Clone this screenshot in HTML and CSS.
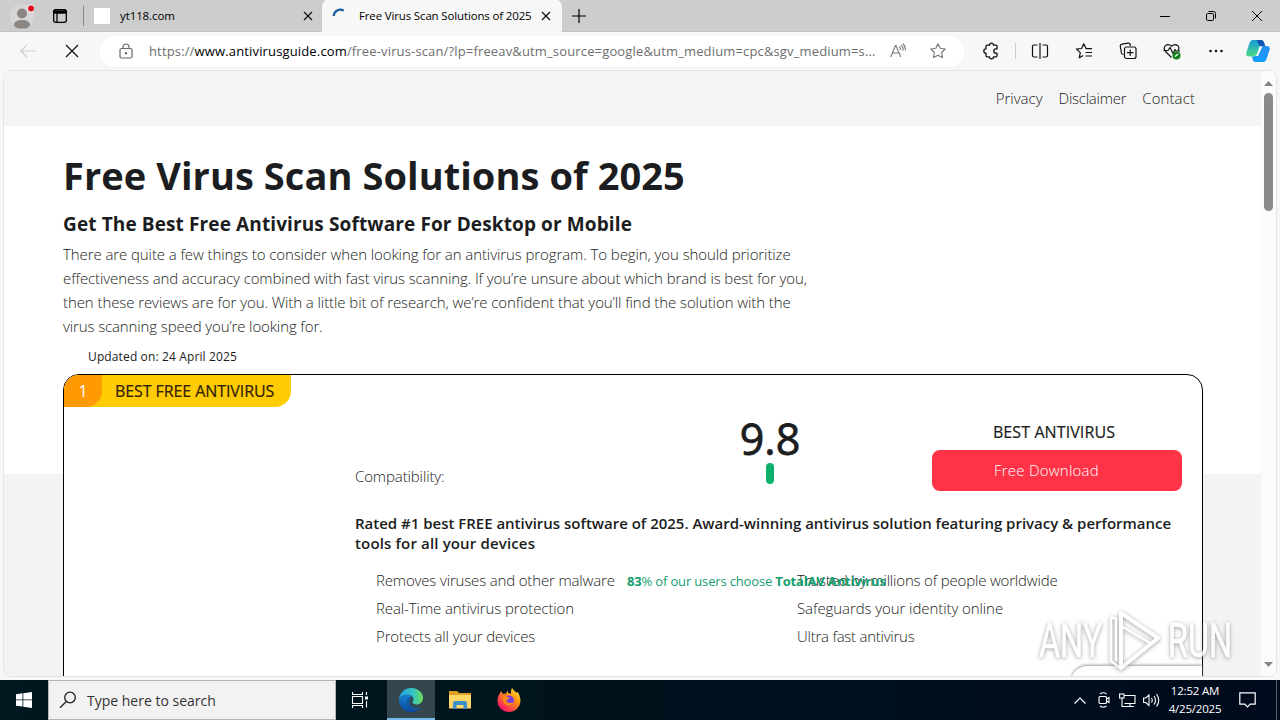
FILE: index.html
```html
<!DOCTYPE html>
<html lang="en">
	<head>
		<meta charset="UTF-8">
		<title>Free Virus Scan Solutions of 2025</title>
		<link rel="stylesheet" href="styles.css">
	</head>
	<body>
		<div class="tabs">
			<svg class="user" width="24" height="26" viewBox="0 0 24 26"><circle cx="12" cy="13" r="12" fill="#d6d6d6"/><circle cx="12" cy="10.500" r="5" fill="#8b8682"/><path d="M4 22c0-3 3-5 8-5s8 2 8 5c-1 3-4 3.500-8 3.500S5 25 4 22z" fill="#8b8682"/><circle cx="21" cy="5.500" r="4" fill="#eee"/><circle cx="21" cy="5.500" r="3" fill="#e00b1c"/></svg>
			<svg class="workspace" width="16" height="16" viewBox="0 0 16 16" fill="none" stroke="#000" stroke-width="1.300"><rect x="1.700" y="1.700" width="12.600" height="12.600" rx="2"/><path d="M2 3h12v2H2zM5 5v9" fill="#000"/></svg>
			<span class="line"></span>
			<div class="tab">
				<span class="blank"></span>
				<span class="name t1">yt118.com</span>
				<svg width="10" height="10" viewBox="0 0 10 10" stroke="#111" stroke-width="1.200"><path d="M1 1l8 8M9 1L1 9"/></svg>
			</div>
			<div class="tab active">
				<svg class="spin" width="16" height="16" viewBox="0 0 16 16" fill="none" stroke="#17619f" stroke-width="2.200"><path d="M1.700 8a6.500 6.500 0 0 1 10-5.300"/></svg>
				<span class="name t2">Free Virus Scan Solutions of 2025</span>
				<svg width="10" height="10" viewBox="0 0 10 10" stroke="#111" stroke-width="1.200"><path d="M1 1l8 8M9 1L1 9"/></svg>
			</div>
			<svg class="plus" width="14" height="14" viewBox="0 0 14 14" stroke="#000" stroke-width="1.200"><path d="M0 7h14M7 0v14"/></svg>
			<div class="wins">
				<svg width="12" height="12" viewBox="0 0 12 12" stroke="#000"><path d="M1 6.500h10"/></svg>
				<svg width="12" height="12" viewBox="0 0 12 12" fill="none" stroke="#000"><rect x="1.500" y="3.500" width="7" height="7" rx="1.200"/><path d="M3.500 1.500h5a2 2 0 0 1 2 2v5"/></svg>
				<svg width="12" height="12" viewBox="0 0 12 12" stroke="#000"><path d="M1 1l10 10M11 1L1 11"/></svg>
			</div>
		</div>
		<div class="bar">
			<svg class="back" width="16" height="14" viewBox="0 0 16 14" fill="none" stroke="#cdcdcd" stroke-width="1.200"><path d="M16 7H1M7 .8L.8 7 7 13.200"/></svg>
			<svg class="stop" width="14" height="14" viewBox="0 0 14 14" stroke="#111" stroke-width="1.200"><path d="M1 1l12 12M13 1L1 13"/></svg>
			<div class="address">
				<svg class="lock" width="14" height="16" viewBox="0 0 14 16" fill="none" stroke="#666" stroke-width="1.200"><rect x="1" y="5.500" width="12" height="9.500" rx="1.500"/><path d="M4 5.500V4a3 3 0 0 1 6 0v1.500"/><circle cx="7" cy="10.300" r=".6" fill="#666"/></svg>
				<p class="url">https://<b>www.antivirusguide.com</b>/free-virus-scan/?lp=freeav&amp;utm_source=google&amp;utm_medium=cpc&amp;sgv_medium=s...</p>
				<svg class="read" width="16" height="16" viewBox="0 0 16 16" fill="none" stroke="#777" stroke-width="1.100"><path d="M.7 14L5.500 2.500h.4L10.700 14M2.400 10h6.600M9.200 3.500q1.500 1.500 1.200 3.500M11 1.800q2.600 2.300 2 5.800M12.800.5q3 3 2.400 6.800"/></svg>
				<svg class="star" width="16" height="16" viewBox="0 0 16 16" fill="none" stroke="#777" stroke-width="1.100" stroke-linejoin="round"><path d="M8 .8l2.200 4.500 5 .7-3.600 3.500.9 5L8 12.200l-4.500 2.300.9-5L.8 6l5-.7z"/></svg>
			</div>
			<div class="tools">
				<svg width="18" height="18" viewBox="0 0 18 18" fill="none" stroke="#111" stroke-width="1.300" stroke-linejoin="round"><path d="M5 3.200h2.500a2 2 0 0 1 4 0H14q1 0 1 1v2.600h-1a2.200 2.200 0 0 0 0 4.400h1v2.600q0 1-1 1h-2.500a2 2 0 0 1-4 0H5q-1 0-1-1v-2.600a2.200 2.200 0 0 1 0-4.400V4.200q0-1 1-1z"/></svg>
				<i></i>
				<svg width="18" height="18" viewBox="0 0 18 18" fill="none" stroke="#111" stroke-width="1.200"><path d="M6.500 3H3a1.500 1.500 0 0 0-1.500 1.500v9A1.500 1.500 0 0 0 3 15h3.500M11.500 3H15a1.500 1.500 0 0 1 1.500 1.500v9A1.500 1.500 0 0 1 15 15h-3.500M9 1v16"/></svg>
				<svg width="18" height="18" viewBox="0 0 18 18" fill="none" stroke="#111" stroke-width="1.200" stroke-linejoin="round"><path d="M17 6.700h-5.800L8.700 1.800 6.600 6.500l-5.200.6 3.900 3.500-1 5.200 3.900-2.200M10.500 10.500H17M10.500 14H17"/></svg>
				<svg width="18" height="18" viewBox="0 0 18 18" fill="none" stroke="#111" stroke-width="1.200"><path d="M4.500 12.500l-1-.3a2 2 0 0 1-1.200-2.300l-1-5.500a2 2 0 0 1 1.700-2.300l6-1A2 2 0 0 1 11.300 3v1"/><rect x="5.500" y="5" width="11.500" height="11.500" rx="2"/><path d="M11.200 7.500v6.500M8 10.700h6.500"/></svg>
				<svg width="18" height="18" viewBox="0 0 18 18" fill="none" stroke="#111" stroke-width="1.200" stroke-linejoin="round"><path d="M8.500 15.500L2.500 9.500C-1 5 4 .2 8.500 4.200 13 .2 18 5 15 8.500M.5 8.500H5l2-3 3 6 2-4 1 1.500h4"/><circle cx="13.500" cy="13.500" r="4" fill="#15801b" stroke="none"/><path d="M12 14.500l3-2.500" stroke="#fff"/></svg>
				<svg width="18" height="18" viewBox="0 0 18 18" fill="#111"><circle cx="3.500" cy="9" r="1.300"/><circle cx="9" cy="9" r="1.300"/><circle cx="14.500" cy="9" r="1.300"/></svg>
			</div>
			<svg class="copilot" width="24" height="24" viewBox="0 0 24 24">
				<defs>
					<linearGradient id="ca" x2="0" y2="1"><stop offset="0" stop-color="#159bd7"/><stop offset="1" stop-color="#4edc87"/></linearGradient>
					<linearGradient id="cb" x2="0" y2="1"><stop offset="0" stop-color="#2b8dec"/><stop offset="1" stop-color="#109eff"/></linearGradient>
				</defs>
				<path d="M7 1h8q2.500 0 3.500 4l.6 2h-3q-2.300 0-3 2l-2 6q-.9 2.500-3 2.500H3q-3.500 0-2.600-4L3.500 4Q4.500 1 7 1z" fill="url(#ca)"/>
				<path d="M11 1h4q2.500 0 3.500 4l.6 2h-4.600Q12.500 7 11 1z" fill="#1556b0"/>
				<path d="M17 7h4q3.500 0 2.600 4L20.500 20q-1 3-3.500 3H9.500Q7 23 6.500 20L6 17.500h2q2.100 0 3-2.500l2-6q.7-2 4-2z" fill="url(#cb)"/>
				<path d="M13.500 7.500h3L12 17H8.700q1.800-.4 2.300-2z" fill="#f5fbff"/>
			</svg>
		</div>
		<div class="view">
			<div class="page">
				<div class="nav"><a class="n1">Privacy</a><a class="n2">Disclaimer</a><a class="n3">Contact</a></div>
				<div class="main">
					<h1>Free Virus Scan Solutions of 2025</h1>
					<h2>Get The Best Free Antivirus Software For Desktop or Mobile</h2>
					<p class="intro">
						<span class="l1">There are quite a few things to consider when looking for an antivirus program. To begin, you should prioritize</span>
						<span class="l2">effectiveness and accuracy combined with fast virus scanning. If you’re unsure about which brand is best for you,</span>
						<span class="l3">then these reviews are for you. With a little bit of research, we’re confident that you’ll find the solution with the</span>
						<span class="l4">virus scanning speed you’re looking for.</span>
					</p>
					<p class="date">Updated on: 24 April 2025</p>
					<div class="card">
						<div class="label"><span class="num">1</span><span class="best">BEST FREE ANTIVIRUS</span></div>
						<div class="info">
							<div class="top">
								<p class="comp">Compatibility:</p>
								<div class="score"><span>9.8</span><i></i></div>
								<div class="get"><p>BEST ANTIVIRUS</p><a><span>Free Download</span></a></div>
							</div>
							<h3><span class="r1">Rated #1 best FREE antivirus software of 2025. Award-winning antivirus solution featuring privacy &amp; performance</span><span class="r2">tools for all your devices</span></h3>
							<div class="lists">
								<ul><li class="a1">Removes viruses and other malware</li><li class="a2">Real-Time antivirus protection</li><li class="a3">Protects all your devices</li></ul>
								<ul><li class="b1">Trusted by millions of people worldwide</li><li class="b2">Safeguards your identity online</li><li class="b3">Ultra fast antivirus</li></ul>
								<p class="users"><b>83</b>% of our users choose <b>TotalAV Antivirus</b></p>
							</div>
						</div>
						<div class="totop"></div>
					</div>
				</div>
			</div>
			<div class="scroll">
				<svg width="9" height="5" viewBox="0 0 9 5"><path d="M0 5L4.500 0 9 5z" fill="#858585"/></svg>
				<span></span>
				<svg width="9" height="5" viewBox="0 0 9 5"><path d="M0 0l4.500 5L9 0z" fill="#858585"/></svg>
			</div>
		</div>
		<div class="mark">
			<span class="any">ANY</span>
			<svg width="58" height="66" viewBox="0 0 58 66" fill="none" stroke="#fff" stroke-width="4" stroke-linejoin="round"><path d="M15 5l37 25L15 60z"/><path d="M15 18l29 17M5 9v44l9 7M5 9l5 2v42" stroke-width="2.500"/></svg>
			<span class="run">RUN</span>
		</div>
		<div class="task">
			<div class="start"><svg width="16" height="16" viewBox="0 0 16 16" fill="#fff"><path d="M0 2.200l6.500-.9v6.200H0zM7.300 1.200L16 0v7.500H7.300zM0 8.300h6.500v6.300L0 13.700zM7.300 8.300H16V16l-8.700-1.300z"/></svg></div>
			<div class="search">
				<svg width="18" height="18" viewBox="0 0 18 18" fill="none" stroke="#222" stroke-width="1.300"><circle cx="11" cy="6.500" r="5.300"/><path d="M7.200 10.500L1 16.700"/></svg>
				<span>Type here to search</span>
			</div>
			<div class="app"><svg width="18" height="18" viewBox="0 0 18 18" fill="none" stroke="#fff" stroke-width="1.100"><path d="M1.500 1v2.500h10V1M1.500 17v-2.500h10V17M1.500 5.500h10v7h-10zM15.500 1v3M15.500 10v6.500"/><path d="M14 5.500h3v3h-3z" fill="#fff" stroke="none"/></svg></div>
			<div class="app on">
				<svg width="24" height="24" viewBox="0 0 24 24">
					<defs>
						<linearGradient id="ea" x2="1"><stop offset="0" stop-color="#1e9de0"/><stop offset=".6" stop-color="#35c6c4"/><stop offset="1" stop-color="#6fdd55"/></linearGradient>
						<linearGradient id="eb" x2="0" y2="1"><stop offset="0" stop-color="#1683d2"/><stop offset="1" stop-color="#0c479e"/></linearGradient>
					</defs>
					<path d="M0 11C1 4 6 0 12 0c7 0 12 4.500 12 10 0 4-3 6.500-6.500 6.500-2.500 0-4-1-4-2.200 0-.8 1-1.300 1-3C14.500 9 12 6.800 8.500 6.800 4.500 6.800 1.500 8.500 0 11z" fill="url(#ea)"/>
					<path d="M0 11.500C1.500 8.500 4.500 6.800 8.500 6.800c2 0 3.500.7 4.500 1.700-3 0-5 2.500-5 5.500 0 4.500 4 7.500 9 7.500 2 0 3.500-.5 4.500-1C19.500 22.500 16 24 12 24 5 24 0 18.500 0 12z" fill="url(#eb)"/>
					<path d="M13 8.500c-2.500 0-5 2.500-5 5.500 0 4.500 4 7.500 9 7.500 2.500 0 4.500-1 5-2-6 2-11.500-1-11.500-5.500 0-2.500 1.500-4.500 2.500-5.500z" fill="#125aa5"/>
				</svg>
			</div>
			<div class="app"><svg width="22" height="20" viewBox="0 0 22 20"><path d="M0 1h8l2 2h12v15H0z" fill="#dfa021"/><path d="M0 5h22v13.500H0z" fill="#ffd768"/><path d="M4 19v-6q0-2 2-2h10q2 0 2 2v6h-3.500v-4h-7v4z" fill="#3c8fc8"/></svg></div>
			<div class="app">
				<svg width="24" height="24" viewBox="0 0 24 24">
					<defs><linearGradient id="ff" x1="1" x2=".2" y2="1"><stop offset="0" stop-color="#fff34f"/><stop offset=".4" stop-color="#ff980e"/><stop offset=".8" stop-color="#ff3750"/><stop offset="1" stop-color="#eb0878"/></linearGradient></defs>
					<path d="M3 5l1-2 2 3q2-1 3 0 0-2 2-3.500V5q2 0 3 1-.5-3.500 1-6 2 3 5 5l.5-1.500C22 6 23.500 9 23.500 13 23 19.500 18 24 12 24S.5 19.500.5 13C.5 9 2 7 3 5z" fill="url(#ff)"/>
					<circle cx="12" cy="12.500" r="5" fill="#7b3fe0"/><path d="M5.500 8.500q3-1 5 .5l2 .5q0 1.500-3 2.500 0 3 3 3 3-.5 4 0-2 3-5.500 2.500-6-1-5.500-9z" fill="#ff8a16"/>
				</svg>
			</div>
			<div class="tray">
				<svg width="12" height="7" viewBox="0 0 12 7" fill="none" stroke="#fff" stroke-width="1.200"><path d="M.5 6.500L6 1l5.500 5.500"/></svg>
				<svg width="12" height="18" viewBox="0 0 12 18" fill="none" stroke="#fff" stroke-width="1.100"><rect x="1" y="5.500" width="7.500" height="7" rx="1"/><path d="M8.500 8l2.500-1.500v5L8.500 10M2 3Q5 .5 8.500 3M2 15q3 2.500 6.500 0"/></svg>
				<svg width="17" height="15" viewBox="0 0 17 15" fill="none" stroke="#fff" stroke-width="1.100"><path d="M5 2.500h11v8H5.500M8 13.500h7M11 10.500v3M3 5v8.500h5"/><rect x=".6" y="1" width="4.400" height="4"/></svg>
				<svg width="17" height="14" viewBox="0 0 17 14" fill="none" stroke="#fff" stroke-width="1.100"><path d="M.6 5h2.200L6 2v10.500L2.800 9.500H.6zM8.500 5q1.500 2.200 0 4.500M11 3q3 4.200 0 8.500M13.500 1q4.500 6.200 0 12.500"/></svg>
			</div>
			<div class="clock"><span class="c1">12:52 AM</span><span class="c2">4/25/2025</span></div>
			<svg class="note" width="17" height="16" viewBox="0 0 17 16" fill="none" stroke="#fff" stroke-width="1.200"><path d="M.8.800h15.400v11.400h-5L8.500 15l-2.700-2.800h-5z"/></svg>
			<span class="edge"></span>
		</div>
	</body>
</html>
```
FILE: styles.css
```css
*{margin: 0;padding: 0;box-sizing: border-box;}
body{width: 1280px;height: 720px;overflow: hidden;position: relative;background: #f7f7f7;font-family: "Open Sans","Noto Sans",sans-serif;color: #1b1d20;white-space: nowrap;}
svg{display: block;flex: none;}
ul{list-style: none;}

/* tabs */
.tabs{height: 32px;background: #cdcdcd;display: flex;align-items: center;border-bottom: 1px solid #c0c0c0;}
.user{margin-left: 10px;margin-top: 1px;}
.workspace{margin-left: 18px;}
.line{width: 1px;height: 20px;background: #888;margin-left: 15px;}
.tab{width: 238px;height: 32px;display: flex;align-items: center;padding: 0 9px 0 10px;font-size: 11.500px;color: #000;}
.tab .name{flex: 1;margin-left: 10px;}
.tab .t1{letter-spacing: -.1px;}
.tab .t2{letter-spacing: -.15px;margin-left: 11px;}
.blank{width: 16px;height: 16px;background: #fff;}
.active{background: #f7f7f7;border-radius: 8px 8px 0 0;height: 33px;width: 240px;padding-right: 11px;}
.plus{margin-left: 10px;}
.wins{margin-left: auto;display: flex;gap: 34px;padding-right: 17px;}

/* address bar */
.bar{height: 38px;display: flex;align-items: center;}
.back{margin-left: 20px;}
.stop{margin-left: 29px;}
.address{width: 864px;height: 31px;margin-left: 21px;background: #fff;border-radius: 16px;display: flex;align-items: center;}
.lock{margin-left: 19px;}
.url{margin-left: 16px;width: 730px;font-size: 13px;letter-spacing: .15px;color: #6e6e6e;}
.url b{font-weight: 400;color: #000;}
.read{margin-left: 11px;}
.star{margin-left: 24px;}
.tools{display: flex;align-items: center;margin-left: 18px;gap: 26px;}
.tools i{width: 1px;height: 16px;background: #ccc;margin: 0 -11px 0 -11px;}
.copilot{margin-left: 21px;}

/* page */
.view{width: 1274px;height: 607px;margin-left: 3px;border: 1px solid #e4e4e4;border-radius: 8px;overflow: hidden;display: flex;background: #fff;}
.page{width: 1258px;height: 605px;overflow: hidden;background: linear-gradient(#fff 403px,#f3f3f3 403px);}
.nav{height: 55px;background: #f4f4f4;display: flex;justify-content: flex-end;gap: 16px;padding: 15px 66px 0 0;font-size: 15px;line-height: 24px;font-weight: 300;}
.n2{letter-spacing: -.25px;}
.n3{letter-spacing: .1px;}
.main{width: 1140px;margin-left: 59px;padding-top: 25px;}
h1{font-size: 38px;line-height: 48px;font-weight: 700;letter-spacing: .06px;}
h2{font-size: 19px;line-height: 24px;font-weight: 700;margin-top: 13px;letter-spacing: .12px;}
.intro{font-size: 15px;line-height: 24px;font-weight: 300;margin-top: 6px;}
.intro span,h3 span{display: block;width: max-content;}
.l1{letter-spacing: -.088px;}
.l2{letter-spacing: -.105px;}
.l3{letter-spacing: -.083px;}
.l4{letter-spacing: -.12px;}
.date{font-size: 12px;line-height: 18px;padding-left: 25px;margin-top: 10px;margin-bottom: 8px;letter-spacing: .13px;}
.card{height: 420px;border: 1px solid #000;border-radius: 16px;background: #fff;position: relative;}
.label{width: 227px;height: 32px;background: #ffcc01;border-radius: 15px 0 16px 0;display: flex;line-height: 32px;font-size: 16px;}
.num{width: 38px;background: #ff9a05;border-radius: 15px 0 16px 0;color: #fff;text-align: center;}
.best{margin-left: 13px;color: #30200c;letter-spacing: -.08px;-webkit-text-stroke: .2px #30200c;}
.info{margin-left: 291px;}
.top{display: flex;height: 103px;}
.comp{width: 355px;padding-top: 57px;font-size: 15px;line-height: 24px;font-weight: 300;letter-spacing: -.12px;}
.score{width: 120px;display: flex;flex-direction: column;align-items: center;}
.score span{font-size: 43px;line-height: 54px;padding-top: 5px;height: 56px;-webkit-text-stroke: .8px #1b1d20;}
.score i{width: 8px;height: 21px;border-radius: 4px;background: #0cb16b;}
.get{width: 250px;margin-left: 102px;padding-top: 13px;}
.get p{font-size: 16px;line-height: 24px;text-align: center;padding-right: 6px;letter-spacing: .1px;-webkit-text-stroke: .2px #1b1d20;}
.get a{display: block;height: 41px;margin-top: 6px;border-radius: 8px;background: #ff3347;color: #fff;font-size: 15px;line-height: 41px;padding-left: 62px;font-weight: 300;letter-spacing: .23px;}
h3{font-size: 15px;line-height: 20px;font-weight: 600;margin-top: 3px;}
.r1{letter-spacing: -.01px;}
.r2{letter-spacing: .15px;}
.lists{display: flex;position: relative;padding: 13px 0 0 21px;font-size: 15px;line-height: 28px;font-weight: 300;}
.lists ul{width: 421px;flex: none;}
.lists li{width: max-content;}
.a1{letter-spacing: -.16px;}
.a2{letter-spacing: -.1px;}
.a3{letter-spacing: -.13px;}
.b1{letter-spacing: -.18px;}
.b2{letter-spacing: -.08px;}
.b3{letter-spacing: -.25px;}
.users{position: absolute;left: 272px;top: 14px;font-size: 13px;letter-spacing: -.16px;color: #159f70;font-weight: 400;}
.totop{position: absolute;right: 0;top: 291px;width: 131px;height: 40px;background: #fff;border-radius: 16px 0 0 0;box-shadow: 0 -1px 3px #999;}
.scroll{width: 15px;background: #fbfbfb;display: flex;flex-direction: column;align-items: center;padding: 10px 0 9px;}
.scroll span{width: 9px;height: 118px;margin-top: 7px;margin-bottom: auto;border-radius: 5px;background: #8a8a8a;}

/* watermark */
.mark{position: absolute;left: 1039px;top: 608px;width: 196px;height: 66px;display: flex;align-items: center;color: #fff;opacity: .8;filter: drop-shadow(0 1px 2px #888);font-family: Roboto,sans-serif;font-size: 49px;line-height: 66px;}
.mark span{width: 63px;transform: scaleX(.66);transform-origin: 0 0;-webkit-text-stroke: .6px #fff;}
.mark svg{margin: 0 4px 0 4px;}

/* taskbar */
.task{height: 40px;margin-top: 3px;background: linear-gradient(90deg,#00171f,#00131d 50%,#000a1c);display: flex;align-items: center;color: #fff;}
.start{width: 48px;display: flex;justify-content: center;}
.search{width: 288px;height: 40px;background: #f2f2f2;border: 1px solid #b5b5b5;display: flex;align-items: center;padding-left: 10px;color: #333;font-size: 14px;}
.search span{margin-left: 10px;}
.app{width: 48px;height: 40px;display: flex;align-items: center;justify-content: center;margin-right: 1px;}
.on{margin-left: 2px;background: #34474e;border-bottom: 2px solid #76b9ed;padding-top: 2px;}
.tray{margin-left: auto;display: flex;align-items: center;gap: 12px;}
.tray svg:nth-child(3){margin-left: -3px;}
.tray svg:nth-child(4){margin-left: -5px;}
.clock{width: 70px;font-size: 11.500px;line-height: 18px;letter-spacing: -.2px;display: flex;flex-direction: column;align-items: center;}
.note{margin-left: 9px;}
.edge{width: 1px;height: 40px;margin: 0 3px 0 20px;background: #555f6b;}
```
